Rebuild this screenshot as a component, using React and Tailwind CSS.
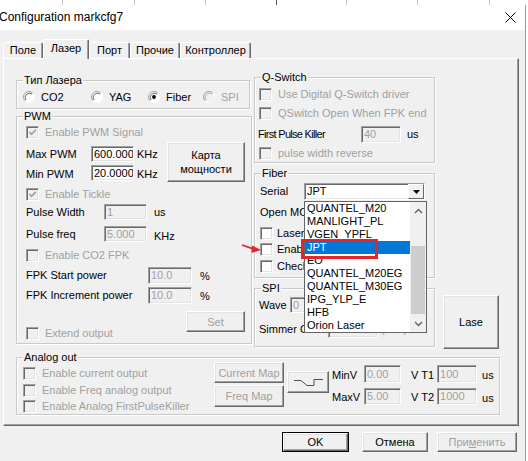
import React from "react";

const DIS = "text-[#a0a0a0]";

function Field({ className = "", value = "", disabled = false }) {
  return (
    <div
      className={`box-border shrink-0 border border-t-[#a0a0a0] border-l-[#a0a0a0] border-b-white border-r-white shadow-[inset_1px_1px_0_#696969,inset_-1px_-1px_0_#e3e3e3] flex items-center pl-[2px] overflow-hidden whitespace-nowrap ${
        disabled ? "bg-[#f0f0f0] text-[#a0a0a0]" : "bg-white text-black"
      } ${className}`}
    >
      {value}
    </div>
  );
}

function Check({ checked = false, disabled = false }) {
  return (
    <div
      className={`box-border w-[13px] h-[13px] shrink-0 border border-t-[#a0a0a0] border-l-[#a0a0a0] border-b-white border-r-white shadow-[inset_1px_1px_0_#696969,inset_-1px_-1px_0_#e3e3e3] flex items-center justify-center ${
        disabled ? "bg-[#f0f0f0]" : "bg-white"
      }`}
    >
      {checked && (
        <svg width="9" height="9" viewBox="0 0 9 9">
          <path d="M1.5 4 L3.5 6.3 L7.8 1.8" fill="none" stroke={disabled ? "#a0a0a0" : "#000"} strokeWidth="1.7" />
        </svg>
      )}
    </div>
  );
}

function CheckRow({ className = "", label, checked, disabled, gap = "gap-[6px]" }) {
  return (
    <div className={`flex items-center whitespace-nowrap ${gap} ${className}`}>
      <Check checked={checked} disabled={disabled} />
      <span className={disabled ? DIS : ""}>{label}</span>
    </div>
  );
}

function Radio({ checked = false, disabled = false }) {
  return (
    <svg width="12" height="12" viewBox="0 0 12 12" className="shrink-0">
      <circle cx="6" cy="6" r="5.5" fill={disabled ? "#f0f0f0" : "#ffffff"} />
      <path d="M2.1 9.9 A5.5 5.5 0 0 1 9.9 2.1" fill="none" stroke="#a0a0a0" strokeWidth="1" />
      <path d="M3 9 A4.3 4.3 0 0 1 9 3" fill="none" stroke={disabled ? "#b4b4b4" : "#696969"} strokeWidth="1" />
      <path d="M9.9 2.1 A5.5 5.5 0 0 1 2.1 9.9" fill="none" stroke="#ffffff" strokeWidth="1" />
      {checked && <circle cx="6" cy="6" r="1.9" fill="#000" />}
    </svg>
  );
}

function RadioItem({ className = "", label, checked, disabled }) {
  return (
    <div className={`flex items-center gap-[6px] ${className}`}>
      <Radio checked={checked} disabled={disabled} />
      <span className={disabled ? DIS : ""}>{label}</span>
    </div>
  );
}

function Btn({ className = "", children, disabled = false }) {
  return (
    <div
      className={`box-border shrink-0 border border-t-white border-l-white border-r-[#696969] border-b-[#696969] shadow-[inset_-1px_-1px_0_#a0a0a0,inset_1px_1px_0_#e3e3e3] bg-[#f0f0f0] flex items-center justify-center text-center leading-[14px] whitespace-nowrap ${
        disabled ? DIS : ""
      } ${className}`}
    >
      {children}
    </div>
  );
}

function Group({ title, className = "", children }) {
  return (
    <fieldset
      className={`box-border shrink-0 border border-[#c9c9c9] shadow-[inset_1px_1px_0_#ffffff,1px_1px_0_#ffffff] ${className}`}
    >
      <legend className="ml-[6px] px-[1px] bg-[#f0f0f0] leading-[13px] whitespace-nowrap">{title}</legend>
      {children}
    </fieldset>
  );
}

function Tab({ className = "", selected = false, children }) {
  return (
    <div
      className={`box-border shrink-0 border-t border-l border-white border-r border-r-[#696969] rounded-t-[2px] shadow-[inset_-1px_0_0_#a0a0a0] flex justify-center bg-[#f0f0f0] whitespace-nowrap ${
        selected ? "h-[20px] -mb-[1px] relative z-10 items-start pt-[2px]" : "h-[16px] items-center"
      } ${className}`}
    >
      {children}
    </div>
  );
}

const LIST = [
  "QUANTEL_M20",
  "MANLIGHT_PL",
  "VGEN_YPFL",
  "JPT",
  "EO",
  "QUANTEL_M20EG",
  "QUANTEL_M30EG",
  "IPG_YLP_E",
  "HFB",
  "Orion Laser",
];

export default function App() {
  return (
    <div className="relative w-[528px] h-[461px] overflow-hidden bg-white font-['Liberation_Sans',Arial,sans-serif] text-[11px] leading-[13px] text-black">
      {/* spreadsheet behind the dialog */}
      <div className="flex h-[5px]">
        <div className="w-[63px] shrink-0 border-r border-[#c8c8c8]" />
        <div className="w-[72px] shrink-0 border-r border-[#c8c8c8]" />
        <div className="w-[71px] shrink-0 border-r border-[#c8c8c8]" />
        <div className="w-[71px] shrink-0 border-r border-[#555]" />
        <div className="w-[70px] shrink-0 border-r border-[#c8c8c8]" />
        <div className="w-[71px] shrink-0 border-r border-[#c8c8c8]" />
        <div className="w-[72px] shrink-0 border-r border-[#c8c8c8]" />
      </div>

      <div className="flex h-[456px]">
        <div className="w-[526px] shrink-0 flex flex-col border-r border-[#9a9a9a]">
          {/* title bar */}
          <div className="h-[25px] shrink-0 bg-white flex items-center justify-between pr-[9px]">
            <span className="text-[12px] -ml-[1px]">Configuration markcfg7</span>
            <svg width="11" height="11" viewBox="0 0 11 11">
              <path d="M0.5 0.5 L10.5 10.5 M10.5 0.5 L0.5 10.5" stroke="#000" strokeWidth="1" />
            </svg>
          </div>

          {/* body */}
          <div className="flex-1 bg-[#f0f0f0] flex flex-col">
            {/* tabs */}
            <div className="flex items-end h-[19px] mt-[9px] pl-[3px]">
              <Tab className="w-[40px]">Поле</Tab>
              <Tab className="w-[46px]" selected>
                Лазер
              </Tab>
              <Tab className="w-[41px]">Порт</Tab>
              <Tab className="w-[50px]">Прочие</Tab>
              <Tab className="w-[71px]">Контроллер</Tab>
            </div>

            {/* tab panel */}
            <div className="box-border ml-[3px] w-[516px] h-[368px] border border-t-white border-l-white border-r-[#696969] border-b-[#696969] shadow-[inset_-1px_-1px_0_#a0a0a0] pt-[12px] pl-[12px] flex flex-col">
              <div className="flex h-[276px]">
                {/* left column */}
                <div className="w-[234px] shrink-0 flex flex-col mt-[3px]">
                  <Group title="Тип Лазера" className="h-[35px]">
                    <div className="flex items-center h-[20px] pl-[6px]">
                      <RadioItem className="w-[68px]" label="CO2" />
                      <RadioItem className="w-[57px]" label="YAG" />
                      <RadioItem className="w-[55px]" label="Fiber" checked />
                      <RadioItem label="SPI" disabled />
                    </div>
                  </Group>

                  <Group title="PWM" className="h-[234px] mt-[1px]">
                    <div className="flex flex-col pl-[9px] pr-[6px]">
                      <CheckRow className="h-[18px]" label="Enable PWM Signal" checked disabled />
                      <div className="flex h-[45px]">
                        <div className="w-[141px] shrink-0 flex flex-col pt-[4px]">
                          <div className="flex items-center h-[18px]">
                            <span className="w-[65px] shrink-0">Max PWM</span>
                            <Field className="w-[43px] h-[16px]" value="600.000" />
                            <span className="ml-[3px]">KHz</span>
                          </div>
                          <div className="flex items-center h-[18px] mt-[1px]">
                            <span className="w-[65px] shrink-0 pt-[3px]">Min PWM</span>
                            <Field className="w-[43px] h-[16px]" value="20.0000" />
                            <span className="ml-[3px] pt-[2px]">KHz</span>
                          </div>
                        </div>
                        <Btn className="mt-[1px] w-[78px] h-[40px]">
                          Карта
                          <br />
                          мощности
                        </Btn>
                      </div>
                      <CheckRow className="h-[17px]" label="Enable Tickle" checked disabled />
                      <div className="flex items-center h-[18px]">
                        <span className="w-[78px] shrink-0">Pulse Width</span>
                        <Field className="w-[43px] h-[16px]" value="1" disabled />
                        <span className="ml-[7px]">us</span>
                      </div>
                      <div className="flex items-center h-[18px] mt-[4px]">
                        <span className="w-[78px] shrink-0">Pulse freq</span>
                        <Field className="w-[43px] h-[16px]" value="5.000" disabled />
                        <span className="ml-[7px] pt-[4px]">KHz</span>
                      </div>
                      <CheckRow className="h-[18px] mt-[3px]" label="Enable CO2 FPK" disabled />
                      <div className="flex items-center h-[18px] mt-[2px]">
                        <span className="w-[122px] shrink-0">FPK Start power</span>
                        <Field className="w-[44px] h-[17px]" value="10.0" disabled />
                        <span className="ml-[8px] pt-[3px]">%</span>
                      </div>
                      <div className="flex items-center h-[18px] mt-[2px]">
                        <span className="w-[122px] shrink-0">FPK Increment power</span>
                        <Field className="w-[44px] h-[17px]" value="10.0" disabled />
                        <span className="ml-[8px] pt-[3px]">%</span>
                      </div>
                      <div className="flex justify-between h-[39px]">
                        <CheckRow className="mt-[21px] h-[16px]" label="Extend output" disabled />
                        <Btn className="mt-[7px] w-[59px] h-[21px]" disabled>
                          Set
                        </Btn>
                      </div>
                    </div>
                  </Group>
                </div>

                {/* right column */}
                <div className="w-[181px] shrink-0 ml-[4px] flex flex-col">
                  <Group title="Q-Switch" className="h-[92px]">
                    <div className="flex flex-col pl-[4px]">
                      <CheckRow className="h-[19px] mt-[1px]" label="Use Digital Q-Switch driver" disabled />
                      <CheckRow className="h-[19px]" label="QSwitch Open When FPK end" disabled />
                      <div className="flex items-center h-[19px] mt-[2px]">
                        <span className="w-[103px] shrink-0 -ml-[1px] tracking-[-0.7px] whitespace-nowrap">
                          First Pulse Killer
                        </span>
                        <Field className="w-[40px] h-[17px]" value="40" disabled />
                        <span className="ml-[6px]">us</span>
                      </div>
                      <CheckRow className="h-[18px]" label="pulse width reverse" disabled />
                    </div>
                  </Group>

                  <Group title="Fiber" className="h-[111px] mt-[4px]">
                    <div className="flex flex-col pl-[5px]">
                      <div className="flex items-center h-[20px] mt-[1px]">
                        <span className="w-[44px] shrink-0">Serial</span>
                        <Field className="w-[121px] h-[17px]" value="" />
                      </div>
                      <div className="flex items-center h-[18px] mt-[2px] whitespace-nowrap">Open MO</div>
                      <CheckRow className="h-[16px] mt-[4px]" gap="gap-[4px]" label="Laser" />
                      <CheckRow className="h-[16px]" gap="gap-[4px]" label="Enable" />
                      <CheckRow className="h-[16px] mt-[1px]" gap="gap-[4px]" label="Check" />
                    </div>
                  </Group>

                  <Group title="SPI" className="h-[65px] mt-[4px]">
                    <div className="flex flex-col pl-[4px]">
                      <div className="flex items-center h-[18px] mt-[1px]">
                        <span className="w-[31px] shrink-0 whitespace-nowrap">Wave</span>
                        <Field className="w-[40px] h-[16px]" value="0" disabled />
                      </div>
                      <div className="flex items-center h-[18px] mt-[6px]">
                        <span className="w-[69px] shrink-0 whitespace-nowrap">Simmer Cur</span>
                        <Field className="w-[50px] h-[18px]" value="" disabled />
                        <span className="ml-[3px] text-[#a0a0a0]">(1~2)</span>
                      </div>
                    </div>
                  </Group>
                </div>

                {/* Lase */}
                <Btn className="ml-[8px] mt-[224px] w-[56px] h-[54px]">Lase</Btn>
              </div>

              {/* Analog out */}
              <Group title="Analog out" className="w-[484px] h-[64px] mt-[4px]">
                <div className="flex">
                  <div className="w-[197px] shrink-0 flex flex-col pl-[6px]">
                    <CheckRow className="h-[16px] mt-[1px]" label="Enable current output" disabled />
                    <CheckRow className="h-[16px] mt-[1px]" label="Enable Freq analog output" disabled />
                    <CheckRow className="h-[16px]" label="Enable Analog FirstPulseKiller" disabled />
                  </div>
                  <div className="flex flex-col -mt-[2px]">
                    <Btn className="w-[70px] h-[21px]" disabled>
                      Current Map
                    </Btn>
                    <Btn className="w-[70px] h-[22px] mt-[2px]" disabled>
                      Freq Map
                    </Btn>
                  </div>
                  <Btn className="w-[42px] h-[22px] ml-[3px] mt-[7px]">
                    <svg width="40" height="20" viewBox="0 0 40 20">
                      <path d="M6 8.5 H13 L19 13.5 H26 V7.5 H35" fill="none" stroke="#505050" strokeWidth="1" />
                    </svg>
                  </Btn>
                  <div className="ml-[3px] flex flex-col">
                    <div className="flex items-center h-[18px] mt-[1px]">
                      <span className="w-[32px] shrink-0 pt-[2px]">MinV</span>
                      <Field className="w-[37px] h-[18px]" value="0.00" disabled />
                      <span className="ml-[10px] pt-[2px] whitespace-nowrap">V T1</span>
                      <Field className="w-[40px] h-[18px] ml-[3px]" value="100" disabled />
                      <span className="ml-[5px] pt-[3px]">us</span>
                    </div>
                    <div className="flex items-center h-[17px] mt-[5px]">
                      <span className="w-[32px] shrink-0 pt-[2px]">MaxV</span>
                      <Field className="w-[37px] h-[17px]" value="5.00" disabled />
                      <span className="ml-[10px] pt-[2px] whitespace-nowrap">V T2</span>
                      <Field className="w-[40px] h-[17px] ml-[3px]" value="1000" disabled />
                      <span className="ml-[5px] pt-[3px]">us</span>
                    </div>
                  </div>
                </div>
              </Group>
            </div>

            {/* bottom buttons */}
            <div className="flex h-[20px] mt-[6px] pl-[282px]">
              <div className="box-border w-[67px] h-[20px] border border-black flex">
                <Btn className="flex-1 h-full">OK</Btn>
              </div>
              <Btn className="w-[66px] h-[20px] ml-[13px]">Отмена</Btn>
              <Btn className="w-[80px] h-[20px] ml-[9px]" disabled>
                <span>
                  При<span className="underline">м</span>енить
                </span>
              </Btn>
            </div>
          </div>
        </div>
        <div className="flex-1 bg-white" />
      </div>

      {/* Serial combo contents (drawn over the field) */}
      <div className="absolute left-[306px] top-[184px] w-[118px] h-[15px] flex items-center justify-between">
        <span className="pl-[1px]">JPT</span>
        <div className="box-border w-[16px] h-[15px] border border-t-white border-l-white border-r-[#696969] border-b-[#696969] bg-[#f0f0f0] flex items-center justify-center">
          <svg width="7" height="4" viewBox="0 0 7 4">
            <path d="M0 0 H7 L3.5 4 Z" fill="#000" />
          </svg>
        </div>
      </div>

      {/* open drop-down list */}
      <div className="absolute left-[304px] top-[201px] w-[123px] h-[132px] box-border bg-white border border-[#646464] flex">
        <div className="flex-1 flex flex-col">
          {LIST.map((it) =>
            it === "JPT" ? (
              <div key={it} className="h-[13px] bg-[#0078d7] text-white pl-[2px] leading-[13px] whitespace-nowrap">
                {it}
              </div>
            ) : (
              <div key={it} className="h-[13px] pl-[2px] leading-[13px] whitespace-nowrap">
                {it}
              </div>
            )
          )}
        </div>
        <div className="w-[16px] shrink-0 bg-[#f0f0f0] flex flex-col">
          <div className="h-[17px] flex items-center justify-center">
            <svg width="9" height="6" viewBox="0 0 9 6">
              <path d="M1 5 L4.5 1.5 L8 5" fill="none" stroke="#606060" strokeWidth="1.3" />
            </svg>
          </div>
          <div className="flex-1 flex flex-col px-[1px]">
            <div className="mt-[27px] h-[68px] bg-[#cdcdcd]" />
          </div>
          <div className="h-[17px] flex items-center justify-center">
            <svg width="9" height="6" viewBox="0 0 9 6">
              <path d="M1 1 L4.5 4.5 L8 1" fill="none" stroke="#606060" strokeWidth="1.3" />
            </svg>
          </div>
        </div>
      </div>

      {/* red highlight box */}
      <div className="absolute left-[301px] top-[239px] w-[77px] h-[20px] box-border border-[3px] border-[#e4262c]" />

      {/* red arrow */}
      <svg className="absolute left-[241px] top-[242px]" width="21" height="12" viewBox="0 0 21 12">
        <path d="M1 3 L13 7.2" stroke="#e4262c" strokeWidth="1.8" fill="none" />
        <path d="M11 3.5 L20 8 L10.5 11 Z" fill="#e4262c" />
      </svg>
    </div>
  );
}
